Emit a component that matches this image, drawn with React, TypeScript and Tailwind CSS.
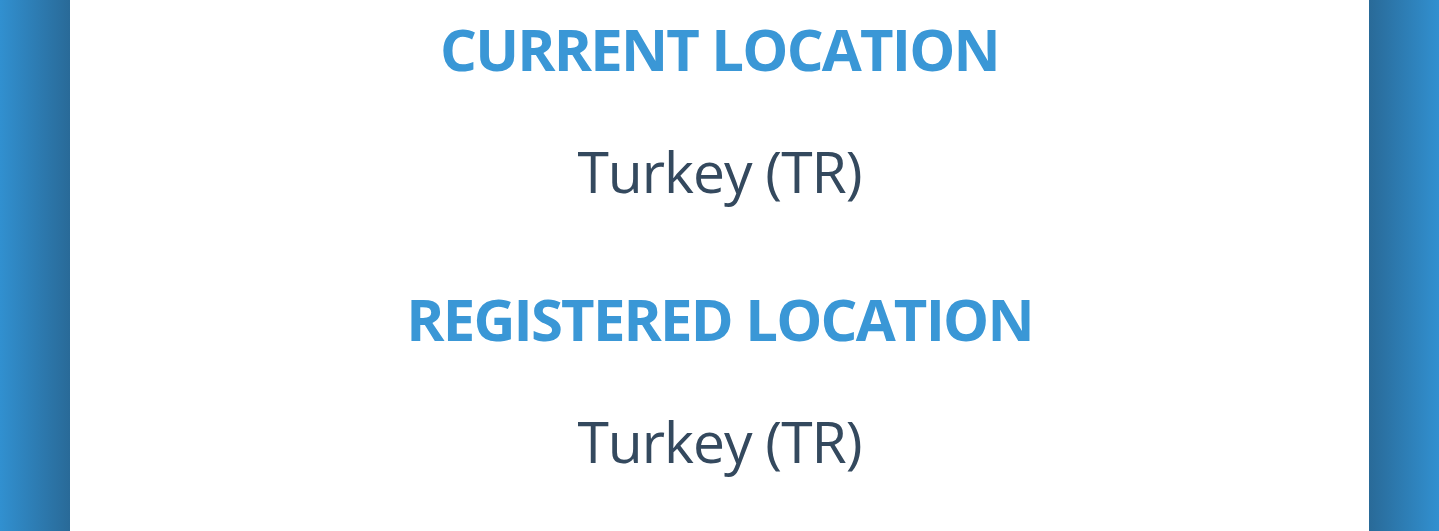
const rows = [
  { label: "CURRENT LOCATION", value: "Turkey (TR)" },
  { label: "REGISTERED LOCATION", value: "Turkey (TR)" },
];

export default function App() {
  return (
    <div
      className="flex h-[531px] w-full overflow-hidden bg-[#318fcf]"
      style={{ fontFamily: '"Open Sans", "Noto Sans", sans-serif' }}
    >
      {/* side gutters fade darker toward the card */}
      <div className="w-[70px] shrink-0 bg-gradient-to-r from-[#3190d0] to-[#296a98]" />
      <main className="flex flex-1 flex-col items-center bg-white pt-[20px]">
        {rows.map((row, i) => (
          <section
            key={row.label}
            className={`flex flex-col items-center gap-[65px] ${i > 0 ? "mt-[90px]" : ""}`}
          >
            <h2 className="text-[58px] font-bold leading-none tracking-[-1.8px] text-[#3a97d6]">
              {row.label}
            </h2>
            <p className="text-[57px] leading-none tracking-[-1px] text-[#34495e]">
              {row.value}
            </p>
          </section>
        ))}
      </main>
      <div className="w-[70px] shrink-0 bg-gradient-to-l from-[#3190d0] to-[#296a98]" />
    </div>
  );
}
